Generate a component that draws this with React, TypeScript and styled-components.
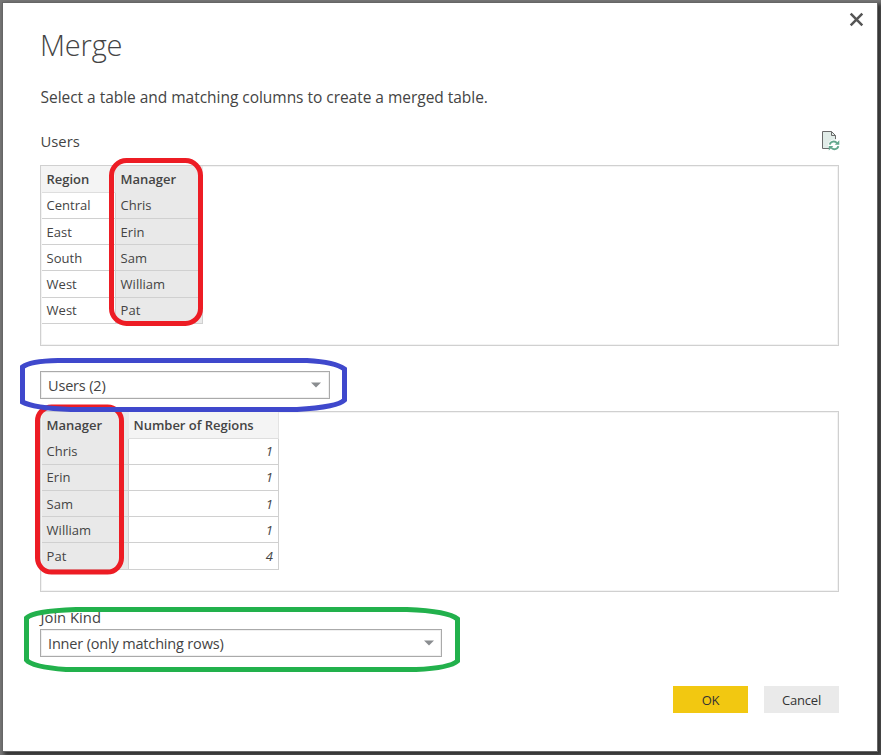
import React from "react";
import styled, { createGlobalStyle } from "styled-components";

const GlobalStyle = createGlobalStyle`
  * { box-sizing: border-box; }
  html, body { margin: 0; padding: 0; }
  body {
    background: #777;
    color: #444;
    font-family: "Open Sans", "Noto Sans", sans-serif;
    overflow: hidden;
  }
`;

const Backdrop = styled.div`
  position: relative;
  height: 755px;
  width: 881px;
  padding: 2px 3px 3px 2px;
  overflow: hidden;
`;

const Dialog = styled.main`
  display: flex;
  flex-direction: column;
  width: 876px;
  height: 750px;
  padding: 0 38px 0 37px;
  background: #fff;
  border: 1px solid #666;
  box-shadow: 3px 3px 4px 1px #333;
`;

const TitleRow = styled.header`
  display: flex;
  justify-content: space-between;
  height: 80px;
  margin-right: -25px;
`;

const Title = styled.h1`
  margin: 22px 0 0;
  font-size: 29px;
  line-height: 40px;
  font-weight: 300;
  letter-spacing: -0.2px;
`;

const CloseButton = styled.button`
  width: 15px;
  height: 15px;
  margin-top: 9px;
  padding: 0;
  border: 0;
  background: none;
  svg { display: block; }
`;

const Description = styled.p`
  height: 28px;
  margin: 0;
  padding-left: 0.5px;
  font-size: 15.5px;
  line-height: 28px;
  letter-spacing: -0.03px;
`;

const SourceRow = styled.div`
  display: flex;
  justify-content: space-between;
  align-items: flex-start;
  height: 37px;
  margin-top: 17px;
  svg { margin: 3px -1px 0 0; }
`;

const Label = styled.label<{ $height: number }>`
  display: block;
  height: ${(p) => p.$height}px;
  padding-left: 0.5px;
  font-size: 14.8px;
  line-height: ${(p) => p.$height - 2}px;
`;

const Preview = styled.section`
  flex: none;
  width: 799px;
  height: 181px;
  padding: 0 1px;
  border: 1px solid #d0d0d0;
  box-shadow: inset 1px 1px #f3f3f3, inset -1px -1px #f3f3f3;
`;

const Grid = styled.div<{ $columns: string; $rows: string }>`
  display: grid;
  grid-template-columns: ${(p) => p.$columns};
  grid-template-rows: 27px ${(p) => p.$rows};
  width: max-content;
`;

const HeadCell = styled.div<{ $selected: boolean }>`
  padding-left: 4.6px;
  font-size: 13px;
  font-weight: 600;
  line-height: 27px;
  letter-spacing: -0.03px;
  white-space: nowrap;
  background: ${(p) => (p.$selected ? "#e9e9e9" : "#f4f4f4")};
  border-right: 1px solid ${(p) => (p.$selected ? "#e9e9e9" : "#e3e3e3")};
  border-bottom: 1px solid ${(p) => (p.$selected ? "#e9e9e9" : "#dedede")};
`;

const Cell = styled.div<{ $selected: boolean; $numeric: boolean; $lowered: boolean }>`
  padding: ${(p) => (p.$lowered ? 1 : 0)}px 5px 0 4.6px;
  font-size: 13px;
  line-height: 25px;
  background: ${(p) => (p.$selected ? "#e9e9e9" : "#fff")};
  border-right: 1px solid #d0d0d0;
  border-bottom: 1px solid #d0d0d0;
  text-align: ${(p) => (p.$numeric ? "right" : "left")};
  font-style: ${(p) => (p.$numeric ? "italic" : "normal")};
`;

const Dropdown = styled.button<{ $width: number; $inset?: number }>`
  display: flex;
  flex: none;
  align-items: center;
  justify-content: space-between;
  width: ${(p) => p.$width}px;
  height: 28px;
  padding: 0 ${(p) => p.$inset ?? 8}px 0 7px;
  background: #fff;
  border: 1px solid #aaa;
  border-radius: 0;
  box-shadow: inset 0 0 0 1px #f0f0f0;
  color: #444;
  font: 14.5px/26px "Open Sans", "Noto Sans", sans-serif;
  letter-spacing: -0.17px;
  text-align: left;
`;

const DropdownText = styled.span`
  padding-top: 2px;
  line-height: 24px;
`;

const TableChoice = styled.div`
  height: 40px;
  margin-top: 25px;
`;

const JoinKind = styled.div`
  margin-top: 16px;
`;

const JoinLabel = styled(Label)`
  margin-bottom: 1px;
`;

const Actions = styled.footer`
  display: flex;
  justify-content: flex-end;
  gap: 16px;
  margin-top: 29px;
`;

const Button = styled.button<{ $primary?: boolean }>`
  width: 75px;
  height: 27px;
  padding: 1px 0 0;
  border: 0;
  background: ${(p) => (p.$primary ? "#f2c811" : "#eaeaea")};
  color: #333;
  font: 13px/26px "Open Sans", "Noto Sans", sans-serif;
  letter-spacing: -0.2px;
`;

const Markup = styled.svg`
  position: absolute;
  inset: 0;
  pointer-events: none;
`;

const Caret = () => (
  <svg width="10" height="6" viewBox="0 0 10 6">
    <path d="M0 .5h10L5 5.5z" fill="#8a8d90" />
  </svg>
);

const RefreshPreviewIcon = () => (
  <svg width="18" height="20" viewBox="0 0 18 20" fill="none">
    <path d="M1 1h9l4 4v13H1z" fill="#e1ece8" />
    <path d="M7 17.5H.5V.5h9l4 4V8M9.5 .5v4h4" stroke="#6b6b6b" />
    <circle cx="12" cy="14.3" r="5.7" fill="#fff" />
    <path d="M7.8 13.6c.6-3.4 5.3-4.2 7.2-1.4M16.3 15.1c-.6 3.4-5.3 4.2-7.2 1.4" stroke="#63a78d" strokeWidth="1.9" />
    <path d="M17.3 9.2v4.5h-4.5zM6.8 19.4v-4.5h4.5z" fill="#63a78d" />
  </svg>
);

interface TableProps {
  columns: string;
  rowHeights: string;
  loweredRows: number[];
  headers: string[];
  rows: string[][];
  selected: number;
  numeric?: number;
}

function PreviewTable({ columns, rowHeights, loweredRows, headers, rows, selected, numeric }: TableProps) {
  return (
    <Preview>
      <Grid $columns={columns} $rows={rowHeights}>
        {headers.map((text, i) => (
          <HeadCell key={text} $selected={i === selected}>{text}</HeadCell>
        ))}
        {rows.map((row, r) =>
          row.map((text, i) => (
            <Cell
              key={`${r}-${i}`}
              $selected={i === selected}
              $numeric={i === numeric}
              $lowered={loweredRows.includes(r)}
            >
              {text}
            </Cell>
          ))
        )}
      </Grid>
    </Preview>
  );
}

export default function App() {
  return (
    <>
      <GlobalStyle />
      <Backdrop>
        <Dialog>
          <TitleRow>
            <Title>Merge</Title>
            <CloseButton aria-label="Close">
              <svg width="15" height="15" viewBox="0 0 15 15">
                <path d="M1.7 1.7l11.6 11.6M13.3 1.7L1.7 13.3" stroke="#555" strokeWidth="2.5" />
              </svg>
            </CloseButton>
          </TitleRow>
          <Description>Select a table and matching columns to create a merged table.</Description>
          <SourceRow>
            <Label $height={28}>Users</Label>
            <RefreshPreviewIcon />
          </SourceRow>
          <PreviewTable
            columns="74px 87px"
            rowHeights="26px 26px 26px 27px 26px"
            loweredRows={[1, 2, 3]}
            headers={["Region", "Manager"]}
            rows={[["Central", "Chris"], ["East", "Erin"], ["South", "Sam"], ["West", "William"], ["West", "Pat"]]}
            selected={1}
          />
          <TableChoice>
            <Dropdown $width={290}><DropdownText>Users (2)</DropdownText><Caret /></Dropdown>
          </TableChoice>
          <PreviewTable
            columns="87px 150px"
            rowHeights="26px 26px 26px 26px 27px"
            loweredRows={[2, 3, 4]}
            headers={["Manager", "Number of Regions"]}
            rows={[["Chris", "1"], ["Erin", "1"], ["Sam", "1"], ["William", "1"], ["Pat", "4"]]}
            selected={0}
            numeric={1}
          />
          <JoinKind>
            <JoinLabel $height={20}>Join Kind</JoinLabel>
            <Dropdown $width={402} $inset={7}><DropdownText>Inner (only matching rows)</DropdownText><Caret /></Dropdown>
          </JoinKind>
          <Actions>
            <Button $primary>OK</Button>
            <Button>Cancel</Button>
          </Actions>
        </Dialog>
        <Markup width="881" height="755" viewBox="0 0 881 755" fill="none" strokeWidth="5">
          <rect x="111.5" y="160.5" width="89" height="163" rx="15" stroke="#ed1c24" />
          <rect x="37.5" y="407" width="84" height="165" rx="14" stroke="#ed1c24" />
          <path d="M58 360.5H307Q335 362 344.5 369V400Q338 407 297 409.5H71Q33 408 22.5 402V367Q30 361 58 360.5Z" stroke="#3f48cc" />
          <path d="M76 609.5H407Q448 611 457.5 619V661Q450 668 416 669.5H66Q32 667 26.5 660V618Q33 611 76 609.5Z" stroke="#22b14c" />
        </Markup>
      </Backdrop>
    </>
  );
}
